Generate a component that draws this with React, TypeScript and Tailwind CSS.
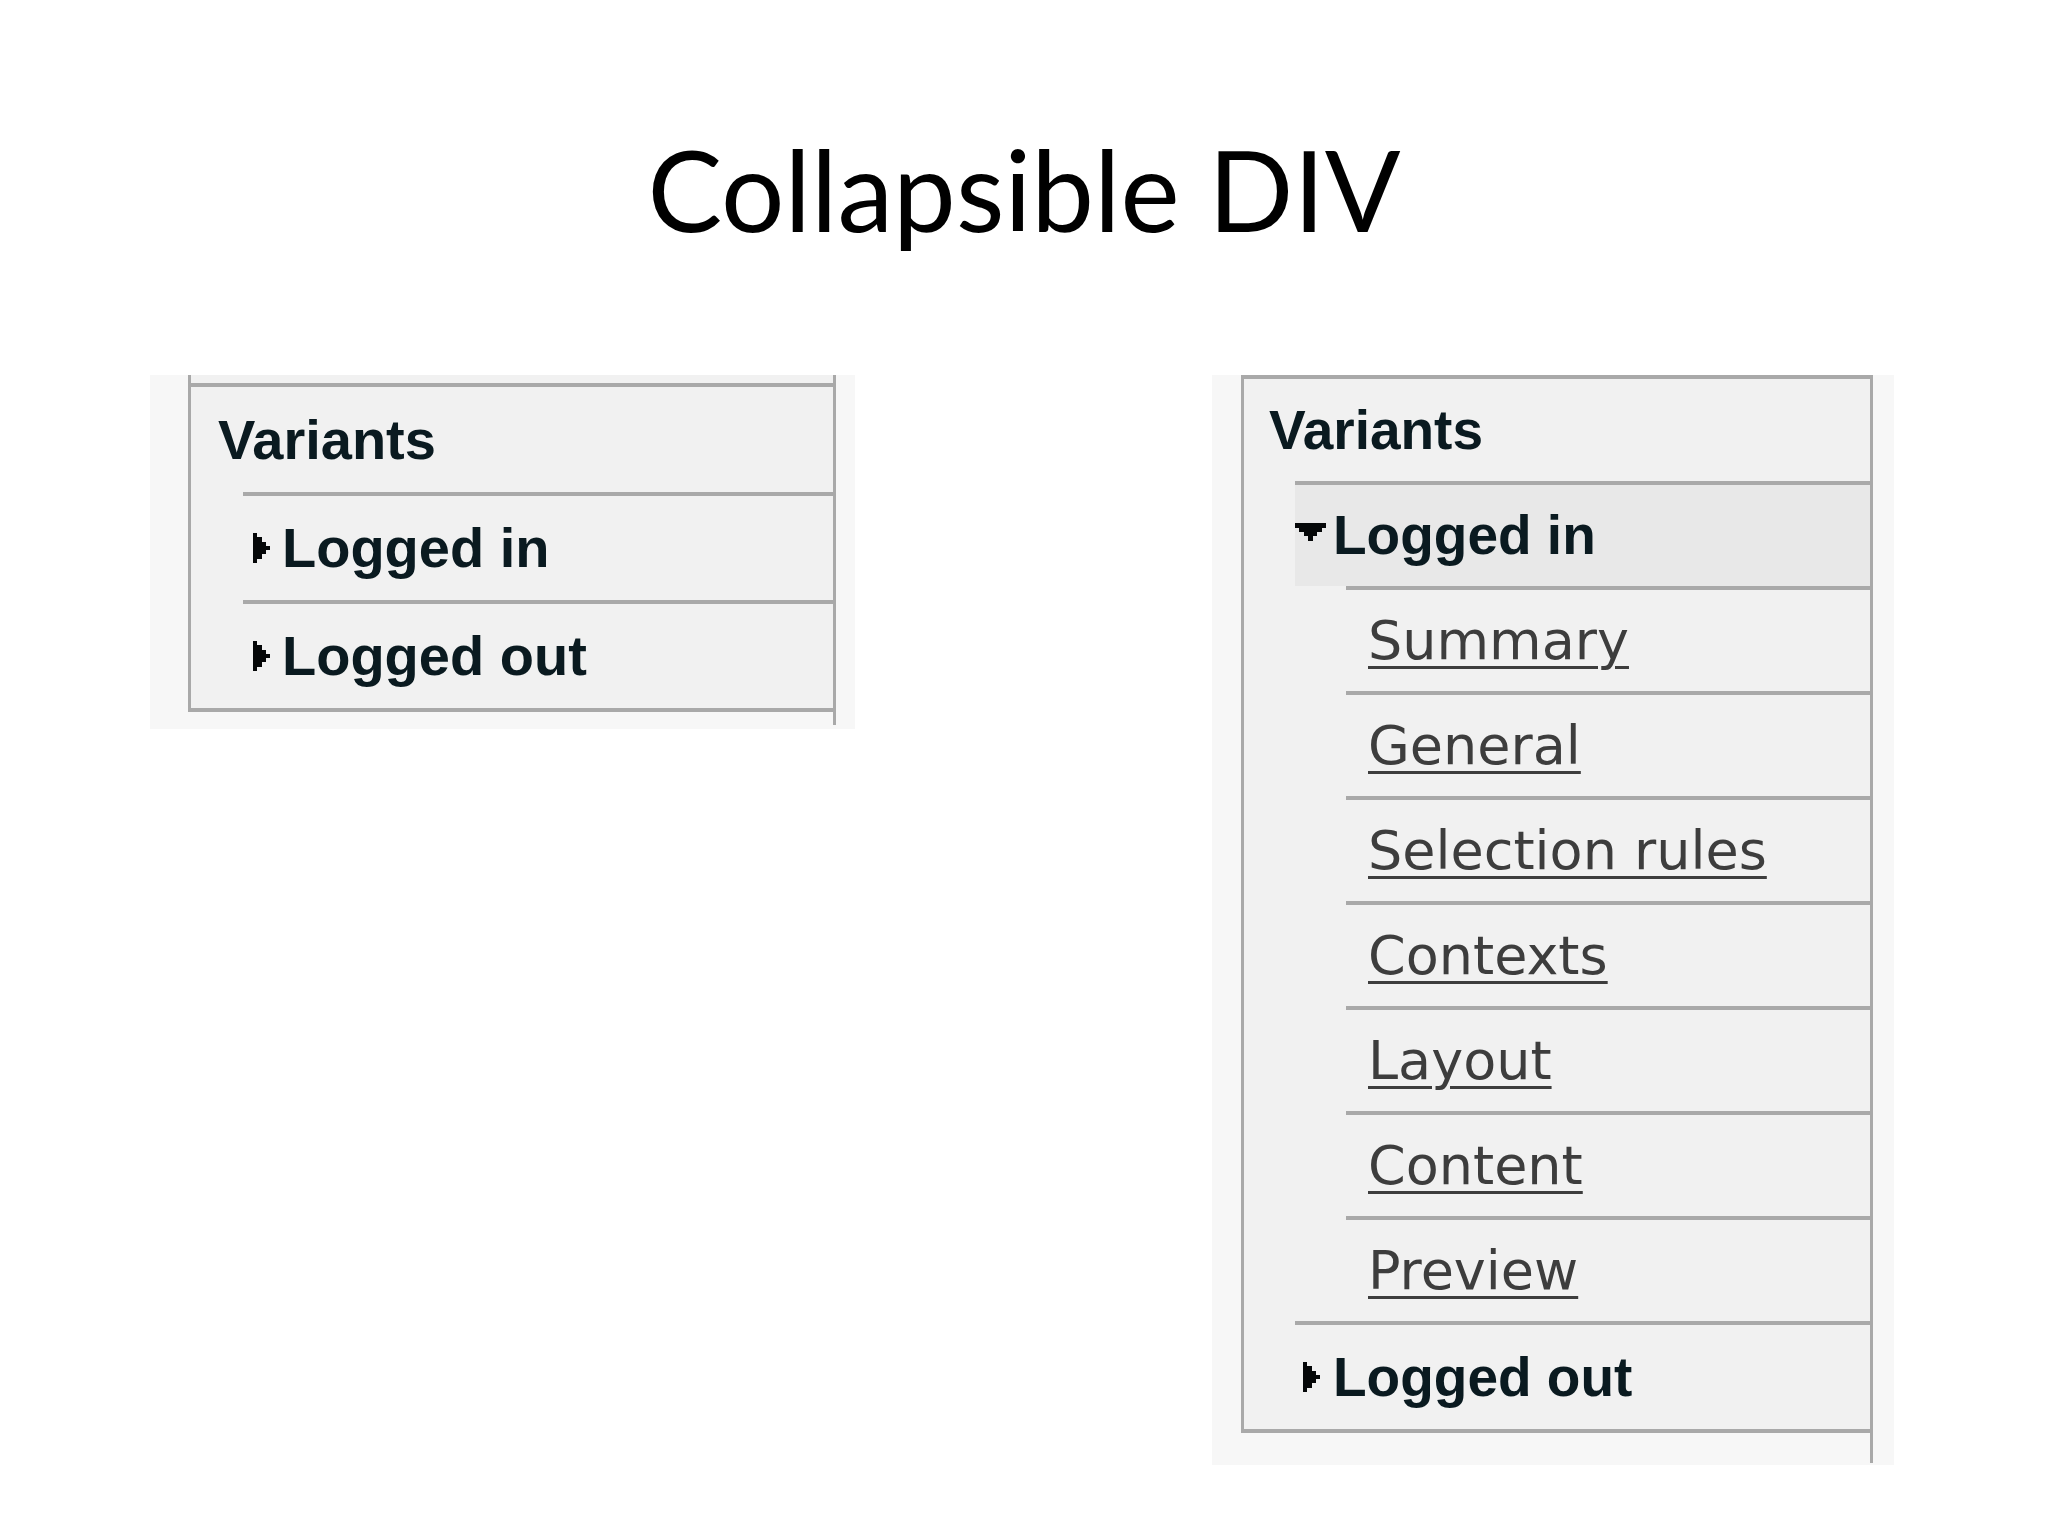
import React from 'react';

const subItems = ['Summary', 'General', 'Selection rules', 'Contexts', 'Layout', 'Content', 'Preview'];

// small pixel triangles used by the tree headers
function Arrow({ open }: { open?: boolean }) {
  if (open) {
    return (
      <svg viewBox="0 0 7 4" className="w-[31px] h-[18px] mb-[8px] shrink-0" shapeRendering="crispEdges">
        <path d="M0 0h7v1h-1v1h-1v1h-1v1h-1v-1h-1v-1h-1v-1h-1z" fill="#050708" />
      </svg>
    );
  }
  return (
    <svg viewBox="0 0 4 7" className="w-[17px] h-[30px] shrink-0" shapeRendering="crispEdges">
      <path d="M0 0h1v1h1v1h1v1h1v1h-1v1h-1v1h-1v1h-1z" fill="#050708" />
    </svg>
  );
}

const head = "font-['Liberation_Sans',Arial,sans-serif] font-bold leading-none text-[#0a1a20]";

function ClosedPanel() {
  return (
    <div className="w-[705px] bg-[#f7f7f7] pl-[38px] pr-[19px] pb-[4px]">
      <div className="h-[8px] border-x-[3px] border-[#a9a9a9] bg-[#f1f1f1]" />
      <div className="border-x-[3px] border-y-4 border-[#a9a9a9] bg-[#f1f1f1]">
        <div className={`h-[105px] flex items-center pl-[27px] text-[56px] ${head}`}>Variants</div>
        <div className="ml-[52px]">
          <div className={`h-[108px] border-t-4 border-[#a9a9a9] flex items-center pl-[10px] gap-[12px] text-[56px] ${head}`}>
            <Arrow />
            <span>Logged in</span>
          </div>
          <div className={`h-[108px] border-t-4 border-[#a9a9a9] flex items-center pl-[10px] gap-[12px] text-[56px] ${head}`}>
            <Arrow />
            <span>Logged out</span>
          </div>
        </div>
      </div>
      <div className="h-[13px] border-r-[3px] border-[#a9a9a9]" />
    </div>
  );
}

function OpenPanel() {
  return (
    <div className="w-[682px] bg-[#f7f7f7] pl-[29px] pr-[21px] pb-[2px]">
      <div className="border-x-[3px] border-y-4 border-[#a9a9a9] bg-[#f1f1f1]">
        <div className={`h-[102px] flex items-center pl-[25px] text-[55px] ${head}`}>Variants</div>
        <div className="ml-[51px]">
          <div className={`h-[105px] border-t-4 border-[#a9a9a9] bg-[#e8e8e8] flex items-center gap-[7px] text-[55px] ${head}`}>
            <Arrow open />
            <span>Logged in</span>
          </div>
          <ul className="ml-[51px]">
            {subItems.map((item) => (
              <li key={item} className="h-[105px] border-t-4 border-[#a9a9a9] flex items-center pl-[22px]">
                <a className="font-['DejaVu_Sans',Verdana,sans-serif] text-[54px] leading-none text-[#3d3d3d] underline decoration-[3px] underline-offset-[7px]">
                  {item}
                </a>
              </li>
            ))}
          </ul>
          <div className={`h-[108px] border-t-4 border-[#a9a9a9] flex items-center pl-[8px] gap-[13px] text-[55px] ${head}`}>
            <Arrow />
            <span>Logged out</span>
          </div>
        </div>
      </div>
      <div className="h-[30px] border-r-[3px] border-[#a9a9a9]" />
    </div>
  );
}

export default function App() {
  return (
    <div className="w-[2048px] h-[1536px] bg-white overflow-hidden">
      <h1 className="pt-[133px] text-center font-[Lato,sans-serif] text-[112px] leading-none text-black">
        Collapsible DIV
      </h1>
      <div className="mt-[130px] flex items-start pl-[150px] gap-[357px]">
        <ClosedPanel />
        <OpenPanel />
      </div>
    </div>
  );
}
